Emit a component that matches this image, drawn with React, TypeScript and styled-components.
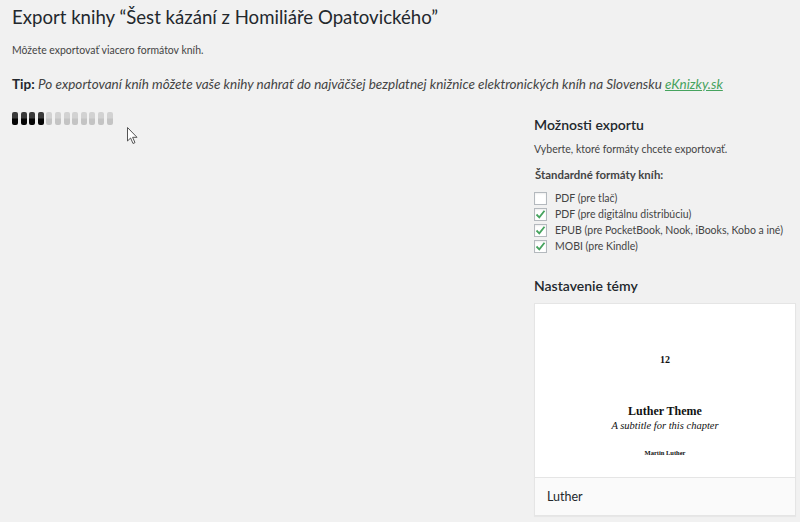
import React from "react";
import styled, { createGlobalStyle } from "styled-components";

const Global = createGlobalStyle`
  html, body { margin: 0; padding: 0; background: #f1f1f1; }
  body { font-family: Lato, "Open Sans", sans-serif; color: #23282d; }
`;

const Page = styled.div`
  padding: 0 5px 0 12px;
  width: 800px;
  height: 522px;
  box-sizing: border-box;
  overflow: hidden;
`;

const Title = styled.h1`
  margin: 0;
  padding-top: 4px;
  font-size: 18.6px;
  font-weight: 400;
  line-height: 26px;
  color: #23282d;
`;

const Lead = styled.p`
  margin: 12px 0 0;
  font-size: 10.45px;
  line-height: 16px;
  color: #444;
`;

const Tip = styled.p`
  margin: 16px 0 0;
  font-size: 13.5px;
  line-height: 20px;
  color: #444;
  b { font-weight: 700; color: #23282d; }
  i { font-style: italic; }
  a { color: #46a35e; text-decoration: underline; }
`;

const Columns = styled.div`
  display: flex;
  margin-top: 14px;
`;

const Main = styled.div`
  flex: 1;
  position: relative;
`;

const Spinner = styled.div`
  display: flex;
  gap: 2.6px;
  padding-top: 4px;
`;

const Bar = styled.span<{ $on: boolean }>`
  width: 6px;
  height: 13px;
  border-radius: 2px;
  background: ${(p) =>
    p.$on
      ? "linear-gradient(#3a3a3a 0 45%, #050505 55% 100%)"
      : "linear-gradient(#d2d2d2 0 45%, #c4c4c4 55% 100%)"};
`;

const Cursor = styled.svg`
  position: absolute;
  left: 115px;
  top: 19px;
`;

const Side = styled.aside`
  width: 260px;
  margin-right: 1px;
  padding-top: 7px;
`;

const SideTitle = styled.h3<{ $top?: number }>`
  margin: ${(p) => p.$top ?? 0}px 0 0;
  font-size: 14px;
  font-weight: 600;
  line-height: 20px;
  color: #23282d;
`;

const SideText = styled.p`
  margin: 6px 0 0;
  font-size: 10.5px;
  line-height: 16px;
  color: #444;
`;

const GroupLabel = styled.div`
  margin: 10px 0 0 1px;
  font-size: 11.4px;
  font-weight: 700;
  line-height: 16px;
  color: #444;
`;

const List = styled.div`
  display: flex;
  flex-direction: column;
  margin-top: 7px;
`;

const Option = styled.label`
  display: flex;
  align-items: center;
  height: 16px;
  font-size: 10.5px;
  white-space: nowrap;
  color: #444;
`;

const Box = styled.span`
  width: 11px;
  height: 11px;
  flex: none;
  border: 1px solid #b4b9be;
  background: #fff;
  margin-right: 8px;
  display: flex;
  align-items: center;
  justify-content: center;
  box-shadow: inset 0 1px 2px rgba(0,0,0,0.07);
`;

const Card = styled.div`
  margin-top: 7px;
  width: 260px;
  background: #fff;
  border: 1px solid #e5e5e5;
  box-shadow: 0 1px 1px rgba(0,0,0,0.04);
`;

const Preview = styled.div`
  height: 173px;
  display: flex;
  flex-direction: column;
  align-items: center;
  font-family: "Liberation Serif", "DejaVu Serif", serif;
  color: #111;
`;

const PageNum = styled.div`
  margin-top: 50px;
  font-size: 10px;
  font-weight: 700;
`;

const ChapTitle = styled.div`
  margin-top: 39px;
  font-size: 12px;
  font-weight: 700;
`;

const ChapSub = styled.div`
  font-size: 10.5px;
  font-style: italic;
  margin-top: 1px;
`;

const Author = styled.div`
  margin-top: 18px;
  font-size: 6.5px;
  font-weight: 700;
`;

const CardFoot = styled.div`
  border-top: 1px solid #e5e5e5;
  background: #fafafa;
  height: 37px;
  display: flex;
  align-items: center;
  padding-left: 12px;
  font-size: 12.5px;
  color: #23282d;
`;

const Check = () => (
  <svg width="11" height="11" viewBox="0 0 11 11">
    <path d="M1.5 5.5 L4.3 8.3 L9.5 1.8" fill="none" stroke="#46a35e" strokeWidth="1.8" />
  </svg>
);

const options = [
  { label: "PDF (pre tlač)", on: false },
  { label: "PDF (pre digitálnu distribúciu)", on: true },
  { label: "EPUB (pre PocketBook, Nook, iBooks, Kobo a iné)", on: true },
  { label: "MOBI (pre Kindle)", on: true },
];

export default function App() {
  return (
    <Page>
      <Global />
      <Title>Export knihy “Šest kázání z Homiliáře Opatovického”</Title>
      <Lead>Môžete exportovať viacero formátov kníh.</Lead>
      <Tip>
        <b>Tip:</b>{" "}
        <i>
          Po exportovaní kníh môžete vaše knihy nahrať do najväčšej bezplatnej knižnice elektronických kníh na Slovensku{" "}
          <a href="#">eKnizky.sk</a>
        </i>
      </Tip>
      <Columns>
        <Main>
          <Spinner>
            {Array.from({ length: 12 }).map((_, i) => (
              <Bar key={i} $on={i < 4} />
            ))}
          </Spinner>
          <Cursor width="12" height="18" viewBox="0 0 12 18">
            <path d="M0.5 0.5 L0.5 14 L3.6 11 L6 16.5 L8 15.6 L5.6 10.3 L10 10.3 Z" fill="#fff" stroke="#555" strokeWidth="1" />
          </Cursor>
        </Main>
        <Side>
          <SideTitle>Možnosti exportu</SideTitle>
          <SideText>Vyberte, ktoré formáty chcete exportovať.</SideText>
          <GroupLabel>Štandardné formáty kníh:</GroupLabel>
          <List>
            {options.map((o) => (
              <Option key={o.label}>
                <Box>{o.on && <Check />}</Box>
                {o.label}
              </Option>
            ))}
          </List>
          <SideTitle $top={22}>Nastavenie témy</SideTitle>
          <Card>
            <Preview>
              <PageNum>12</PageNum>
              <ChapTitle>Luther Theme</ChapTitle>
              <ChapSub>A subtitle for this chapter</ChapSub>
              <Author>Martin Luther</Author>
            </Preview>
            <CardFoot>Luther</CardFoot>
          </Card>
        </Side>
      </Columns>
    </Page>
  );
}
